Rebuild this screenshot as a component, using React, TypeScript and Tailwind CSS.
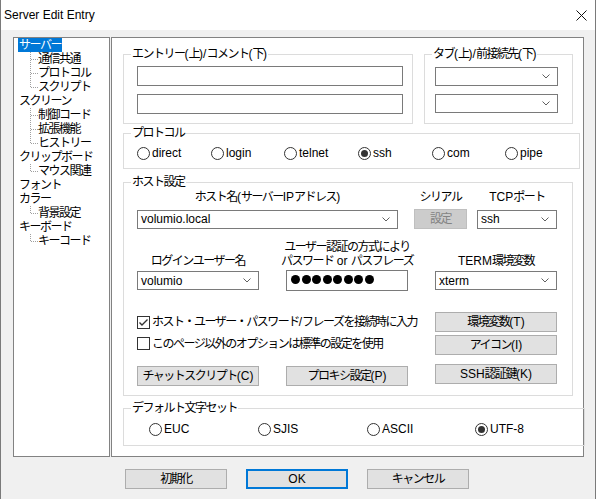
import React from 'react';

// tighten only the CJK runs, leave latin runs at normal spacing
const J = ({ t }: { t: string }) => (
  <>
    {t
      .split(/([\x00-\x7f]+)/)
      .filter((s) => s !== '')
      .map((s, i) =>
        /^[\x00-\x7f]+$/.test(s) ? (
          <span key={i}>{s}</span>
        ) : (
          <span key={i} className="tracking-[-1.5px]">
            {s}
          </span>
        )
      )}
  </>
);

const tree = [
  { t: 'サーバー', c: ['通信共通', 'プロトコル', 'スクリプト'], sel: true },
  { t: 'スクリーン', c: ['制御コード', '拡張機能', 'ヒストリー'] },
  { t: 'クリップボード', c: ['マウス関連'] },
  { t: 'フォント', c: [] as string[] },
  { t: 'カラー', c: ['背景設定'] },
  { t: 'キーボード', c: ['キーコード'] },
];

const Chevron = () => (
  <svg width="8" height="5" viewBox="0 0 8 5" className="shrink-0">
    <polyline points="0.5,0.5 4,4 7.5,0.5" fill="none" stroke="#606060" strokeWidth="1" />
  </svg>
);

const Combo = ({ value = '', className = '' }: { value?: string; className?: string }) => (
  <div className={`flex h-[19px] items-center justify-between border border-[#7a7a7a] bg-white pl-[3px] pr-[7px] ${className}`}>
    <span className="leading-[14px]">{value}</span>
    <Chevron />
  </div>
);

const Btn = ({ t, className = '', primary = false }: { t: string; className?: string; primary?: boolean }) => (
  <div
    className={`flex h-[20px] items-center justify-center whitespace-nowrap bg-[#e1e1e1] leading-[14px] ${
      primary ? 'border-2 border-[#0078d7]' : 'border border-[#adadad]'
    } ${className}`}
  >
    <J t={t} />
  </div>
);

const Radio = ({ label, checked = false, className = '' }: { label: string; checked?: boolean; className?: string }) => (
  <div className={`flex items-center gap-[2px] ${className}`}>
    <div className="flex h-[13px] w-[13px] items-center justify-center rounded-full border border-[#333333] bg-white">
      {checked && <div className="h-[7px] w-[7px] rounded-full bg-[#333333]" />}
    </div>
    <span className="leading-[14px]">{label}</span>
  </div>
);

const Check = ({ label, checked = false }: { label: string; checked?: boolean }) => (
  <div className="flex items-center gap-[2px] whitespace-nowrap">
    <div className="flex h-[13px] w-[13px] shrink-0 items-center justify-center border border-[#333333] bg-white">
      {checked && (
        <svg width="11" height="11" viewBox="0 0 11 11">
          <polyline points="1.5,5.5 4,8 9.5,2.5" fill="none" stroke="#333333" strokeWidth="1.4" />
        </svg>
      )}
    </div>
    <span className="leading-[14px]">
      <J t={label} />
    </span>
  </div>
);

const Legend = ({ t }: { t: string }) => (
  <legend className="ml-[7px] whitespace-nowrap px-[1px] text-[12px] leading-[12px]">
    <J t={t} />
  </legend>
);

const Label = ({ t, className = '' }: { t: string; className?: string }) => (
  <div className={`flex justify-center whitespace-nowrap leading-[14px] ${className}`}>
    <span>
      <J t={t} />
    </span>
  </div>
);

const TreeView = () => (
  <div className="h-[420px] w-[97px] border border-[#828282] bg-white">
    {tree.map((n) => (
      <div key={n.t}>
        <div className="flex h-[14px] items-center pl-[4px]">
          <span className={`px-[1px] leading-[14px] ${n.sel ? 'bg-[#0078d7] text-white' : ''}`}>
            <J t={n.t} />
          </span>
        </div>
        {n.c.map((c, i) => (
          <div key={c} className="flex h-[14px] items-center pl-[4px]">
            <svg width="20" height="14" viewBox="0 0 20 14" className="shrink-0">
              <line x1="12.5" y1="0" x2="12.5" y2={i === n.c.length - 1 ? 7.5 : 14} stroke="#a0a0a0" strokeDasharray="1 1" />
              <line x1="13" y1="7.5" x2="20" y2="7.5" stroke="#a0a0a0" strokeDasharray="1 1" />
            </svg>
            <span className="leading-[14px]">
              <J t={c} />
            </span>
          </div>
        ))}
      </div>
    ))}
  </div>
);

export default function App() {
  return (
    <div className="h-[499px] w-[597px] overflow-hidden bg-white font-['Liberation_Sans','Noto_Sans_CJK_JP',sans-serif] text-[12px] text-black">
      <div className="flex h-full w-[596px] flex-col border-x border-[#7a7a7a]">
        {/* title bar */}
        <div className="flex h-[30px] shrink-0 items-center justify-between bg-white pl-[3px] pr-[8px]">
          <span className="text-[12px]">Server Edit Entry</span>
          <svg width="11" height="11" viewBox="0 0 11 11">
            <line x1="0.5" y1="0.5" x2="10.5" y2="10.5" stroke="#111" strokeWidth="1" />
            <line x1="10.5" y1="0.5" x2="0.5" y2="10.5" stroke="#111" strokeWidth="1" />
          </svg>
        </div>

        {/* body */}
        <div className="flex flex-1 flex-col bg-[#f0f0f0] pl-[12px] pt-[7px]">
          <div className="flex gap-[1px]">
            <TreeView />

            <div className="flex h-[420px] w-[473px] flex-col border border-[#828282] bg-white pl-[11px] pr-[10px] pt-[10px]">
              {/* entry / tab */}
              <div className="flex h-[76px] gap-[11px]">
                <fieldset className="h-[76px] w-[290px] border border-[#dcdcdc]">
                  <Legend t="エントリー(上)/コメント(下)" />
                  <div className="pl-[13px]">
                    <div className="mt-[6px] h-[20px] w-[266px] border border-[#7a7a7a] bg-white" />
                    <div className="mt-[8px] h-[20px] w-[266px] border border-[#7a7a7a] bg-white" />
                  </div>
                </fieldset>
                <fieldset className="h-[76px] flex-1 border border-[#dcdcdc]">
                  <Legend t="タブ(上)/前接続先(下)" />
                  <div className="pl-[10px]">
                    <Combo className="mt-[7px] w-[123px]" />
                    <Combo className="mt-[8px] w-[123px]" />
                  </div>
                </fieldset>
              </div>

              {/* protocol */}
              <fieldset className="mt-[3px] h-[42px] border border-[#dcdcdc]">
                <Legend t="プロトコル" />
                <div className="mt-[7px] flex pl-[13px]">
                  <Radio label="direct" className="w-[74px]" />
                  <Radio label="login" className="w-[73px]" />
                  <Radio label="telnet" className="w-[74px]" />
                  <Radio label="ssh" checked className="w-[74px]" />
                  <Radio label="com" className="w-[73px]" />
                  <Radio label="pipe" className="w-[74px]" />
                </div>
              </fieldset>

              {/* host */}
              <fieldset className="mt-[7px] h-[220px] border border-[#dcdcdc]">
                <Legend t="ホスト設定" />
                <div className="pl-[13px]">
                  <div className="mt-[2px] flex h-[14px] items-center">
                    <Label t="ホスト名(サーバーIPアドレス)" className="w-[261px]" />
                    <Label t="シリアル" className="ml-[16px] w-[53px]" />
                    <Label t="TCPポート" className="ml-[10px] w-[80px]" />
                  </div>
                  <div className="mt-[5px] flex h-[20px] items-center">
                    <Combo value="volumio.local" className="w-[261px]" />
                    <div className="ml-[16px] flex h-[20px] w-[53px] items-center justify-center border border-[#bfbfbf] bg-[#cccccc] text-[#838383]">
                      <J t="設定" />
                    </div>
                    <Combo value="ssh" className="ml-[10px] w-[80px]" />
                  </div>

                  <div className="mt-[11px] grid grid-cols-[122px_122px_122px] items-end gap-x-[27px]">
                    <Label t="ログインユーザー名" />
                    <div className="flex flex-col">
                      <Label t="ユーザー認証の方式により" className="leading-[11px]" />
                      <Label t="パスワード or パスフレーズ" className="leading-[12px]" />
                    </div>
                    <Label t="TERM環境変数" />
                  </div>
                  <div className="mt-[2px] grid grid-cols-[122px_122px_122px] items-center gap-x-[27px]">
                    <Combo value="volumio" />
                    <div className="flex h-[21px] items-center gap-[1.5px] border border-[#7a7a7a] bg-white pb-[2px] pl-[4px]">
                      {Array.from({ length: 8 }).map((_, i) => (
                        <div key={i} className="h-[9px] w-[9px] rounded-full bg-black" />
                      ))}
                    </div>
                    <Combo value="xterm" />
                  </div>

                  <div className="mt-[21px] grid grid-cols-[122px_122px_122px] grid-rows-[20px_20px_20px] gap-x-[27px]">
                    <div className="col-span-2 flex items-center">
                      <Check label="ホスト・ユーザー・パスワード/フレーズを接続時に入力" checked />
                    </div>
                    <Btn t="環境変数(T)" />
                    <div className="col-span-2 mt-[3px] flex items-center">
                      <Check label="このページ以外のオプションは標準の設定を使用" />
                    </div>
                    <Btn t="アイコン(I)" className="mt-[3px]" />
                    <Btn t="チャットスクリプト(C)" className="mt-[14px]" />
                    <Btn t="プロキシ設定(P)" className="mt-[14px]" />
                    <Btn t="SSH認証鍵(K)" className="mt-[12px]" />
                  </div>
                </div>
              </fieldset>

              {/* charset */}
              <fieldset className="mt-[6px] h-[44px] border border-[#dcdcdc]">
                <Legend t="デフォルト文字セット" />
                <div className="mt-[8px] flex pl-[25px]">
                  <Radio label="EUC" className="w-[109px]" />
                  <Radio label="SJIS" className="w-[109px]" />
                  <Radio label="ASCII" className="w-[108px]" />
                  <Radio label="UTF-8" checked className="w-[109px]" />
                </div>
              </fieldset>
            </div>
          </div>

          {/* bottom buttons */}
          <div className="ml-[112px] mt-[12px] flex gap-[19px]">
            <Btn t="初期化" className="w-[102px]" />
            <Btn t="OK" primary className="w-[102px]" />
            <Btn t="キャンセル" className="w-[102px]" />
          </div>
        </div>
      </div>
    </div>
  );
}
